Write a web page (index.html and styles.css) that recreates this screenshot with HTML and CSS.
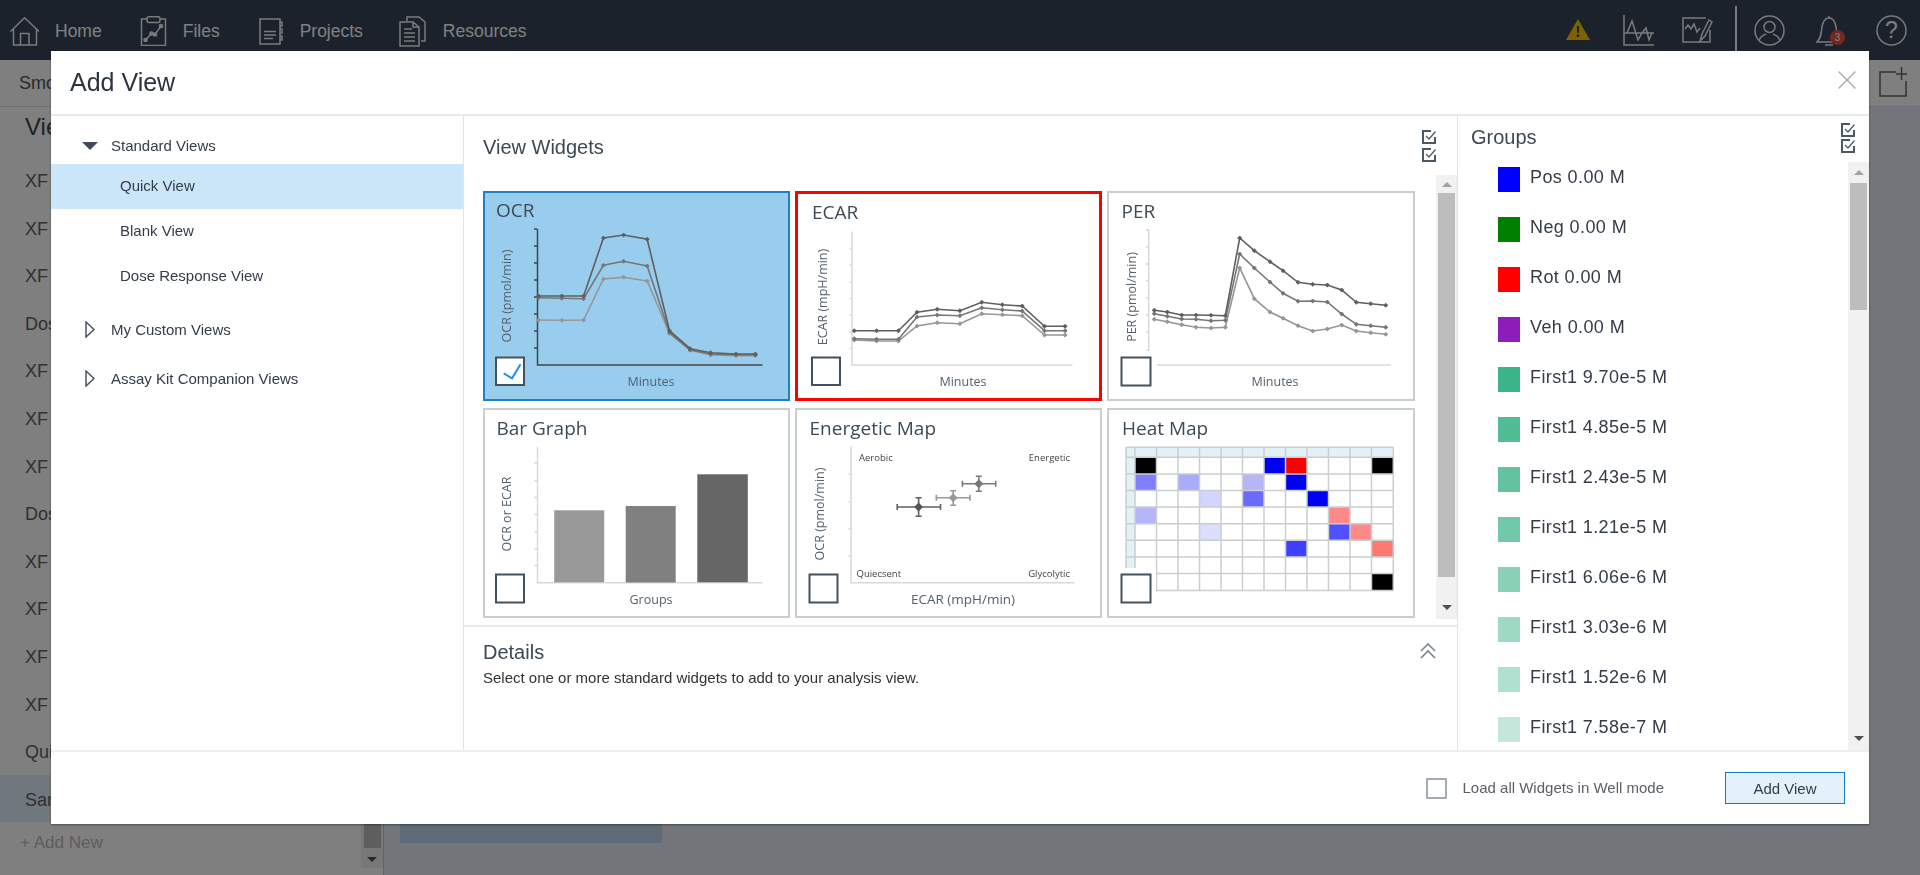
FILE: index.html
```html
<!DOCTYPE html>
<html lang="en">
  <head>
    <meta charset="UTF-8" />
    <title>Add View</title>
    <link rel="stylesheet" href="styles.css">
  </head>
  <body>
    <svg class="svg-defs" width="0" height="0">
      <defs>
        <marker id="dot1" markerUnits="userSpaceOnUse" markerWidth="5" markerHeight="5" refX="2.5" refY="2.5"><path d="M2.5 0L5 2.5L2.5 5L0 2.5Z" fill="#5f5f5f" /></marker>
        <marker id="dot2" markerUnits="userSpaceOnUse" markerWidth="5" markerHeight="5" refX="2.5" refY="2.5"><path d="M2.5 0L5 2.5L2.5 5L0 2.5Z" fill="#767676" /></marker>
        <marker id="dot3" markerUnits="userSpaceOnUse" markerWidth="5" markerHeight="5" refX="2.5" refY="2.5"><path d="M2.5 0L5 2.5L2.5 5L0 2.5Z" fill="#969696" /></marker>
      </defs>
    </svg>

    <header class="topbar">
      <a class="nav-item">
        <svg class="nav-icon" width="30" height="29" viewBox="0 0 30 29"><path d="M0.5 14.5L14.5 0.8L29 14.5M3.5 11V28H26.5V11M10.5 28V16.5H19V28" /></svg>
        Home
      </a>
      <a class="nav-item nav-files">
        <svg class="nav-icon" width="27" height="30" viewBox="0 0 27 30"><path d="M7 3H1.5V29.5H25.5V3H20M9 0.7H18Q20 0.7 20 2.7V4.5Q20 6.5 18 6.5H9Q7 6.5 7 4.5V2.7Q7 0.7 9 0.7ZM5.5 24L11.5 17.5L15 18.5L21 10" /><circle cx="5.5" cy="24" r="1.6" /><circle cx="11.5" cy="17.5" r="1.6" /><circle cx="15" cy="18.5" r="1.6" /><circle cx="21" cy="10" r="1.6" /></svg>
        Files
      </a>
      <a class="nav-item nav-projects">
        <svg class="nav-icon" width="24" height="27" viewBox="0 0 24 27"><path d="M1 1H21V26H1ZM5 13.5H17M5 17H17M5 20.5H14M21 4H23V8H21M21 11H23V15H21M21 18H23V22H21" /></svg>
        Projects
      </a>
      <a class="nav-item nav-resources">
        <svg class="nav-icon" width="28" height="31" viewBox="0 0 28 31"><path d="M8 5V1H20L26 6V25H22M1 6H14L20 11V30H1ZM14 6V11H20M5 13H13M5 17H16M5 21H16M5 25H16" /></svg>
        Resources
      </a>
      <div class="topbar-tools">
        <svg class="warn-icon" width="24" height="21" viewBox="0 0 24 21"><path class="warn-shape" d="M12 0L24 21H0Z" /><path class="warn-mark" d="M10.8 7H13.2L12.8 14H11.2ZM10.8 15.5H13.2V18H10.8Z" /></svg>
        <svg class="nav-icon tool-chart" width="31" height="31" viewBox="0 0 31 31"><path d="M1 0V30H31M1 18H31M1 18H4L9 6L15 25L19 18L23 13L26 25L29 18" /></svg>
        <svg class="nav-icon tool-edit" width="31" height="27" viewBox="0 0 31 27"><path d="M24 1H1V25H28V13M3 12L6 8L9 12L12 7L15 15L18 11M18 24L20 17L27 3L30 5L23 19Z" /></svg>
        <span class="tools-divider"></span>
        <svg class="nav-icon" width="31" height="31" viewBox="0 0 31 31"><circle cx="15.5" cy="15.5" r="14.5" /><circle cx="15.5" cy="12" r="5.5" /><path d="M5 26C6 21 10 20 12 19M26 26C25 21 21 20 19 19" /></svg>
        <div class="bell">
          <svg class="nav-icon" width="26" height="31" viewBox="0 0 26 31"><path d="M13 1V3M1 27H25C21 23 21 19 20 12C19 6 16 3 13 3C10 3 7 6 6 12C5 19 5 23 1 27ZM9 30H17" /></svg>
          <span class="bell-badge">3</span>
        </div>
        <div class="help">
          <svg class="nav-icon" width="31" height="31" viewBox="0 0 31 31"><circle cx="15.5" cy="15.5" r="14.5" /></svg>
          <span class="help-mark">?</span>
        </div>
      </div>
    </header>

    <div class="subbar">
      <span class="subbar-title">Smo</span>
      <svg class="add-icon" width="28" height="30" viewBox="0 0 28 30"><path d="M17 5H1V29H27V14M17 7H28M22.5 0V13" /></svg>
    </div>

    <div class="workspace">
      <aside class="sidebar">
        <div class="sidebar-list">
          <h2 class="sidebar-heading">View</h2>
          <div class="sidebar-row">XF</div>
          <div class="sidebar-row">XF</div>
          <div class="sidebar-row">XF</div>
          <div class="sidebar-row">Dos</div>
          <div class="sidebar-row">XF</div>
          <div class="sidebar-row">XF</div>
          <div class="sidebar-row">XF</div>
          <div class="sidebar-row">Dos</div>
          <div class="sidebar-row">XF</div>
          <div class="sidebar-row">XF</div>
          <div class="sidebar-row">XF</div>
          <div class="sidebar-row">XF</div>
          <div class="sidebar-row">Qui</div>
          <div class="sidebar-row sidebar-row-active">San</div>
          <div class="sidebar-add">+ Add New</div>
        </div>
        <div class="scrollbar scrollbar-sidebar">
          <span class="scroll-up"></span>
          <span class="scroll-thumb"></span>
          <span class="scroll-down"></span>
        </div>
      </aside>
      <main class="canvas">
        <div class="canvas-block"></div>
      </main>
    </div>

    <div class="overlay">
      <div class="modal">
        <div class="modal-header">
          <h1 class="modal-title">Add View</h1>
          <svg class="modal-close" width="18" height="18" viewBox="0 0 18 18"><path d="M0.5 0.5L17.5 17.5M17.5 0.5L0.5 17.5" /></svg>
        </div>

        <div class="modal-body">
          <nav class="tree">
            <div class="tree-group tree-group-first">
              <svg class="tree-arrow" width="16" height="8" viewBox="0 0 16 8"><path class="arrow-open" d="M0 0H16L8 8Z" /></svg>
              Standard Views
            </div>
            <div class="tree-item tree-item-active">Quick View</div>
            <div class="tree-item">Blank View</div>
            <div class="tree-item">Dose Response View</div>
            <div class="tree-group tree-group-next">
              <svg class="tree-arrow" width="16" height="17" viewBox="0 0 16 17"><path class="arrow-closed" d="M4 1L12 8.5L4 16Z" /></svg>
              My Custom Views
            </div>
            <div class="tree-group">
              <svg class="tree-arrow" width="16" height="17" viewBox="0 0 16 17"><path class="arrow-closed" d="M4 1L12 8.5L4 16Z" /></svg>
              Assay Kit Companion Views
            </div>
          </nav>

          <section class="widgets">
            <div class="widgets-header">
              <h2 class="section-title">View Widgets</h2>
              <div class="check-stack check-stack-wide">
                <svg class="check-icon" width="14" height="14" viewBox="0 0 14 14"><path class="check-box" d="M9 1H1V13H13V7" /><path class="check-tick" d="M4 6L7 9L13.5 1.5" /></svg>
                <svg class="check-icon" width="14" height="14" viewBox="0 0 14 14"><path class="check-box" d="M9 1H1V13H13V7" /><path class="check-tick" d="M4 6L7 9L13.5 1.5" /></svg>
              </div>
            </div>

            <div class="widgets-main">
              <div class="tile-grid">
                <div class="tile tile-selected">
                  <svg viewBox="485 193 303 206" width="303" height="206">
                    <text class="tile-name" x="496" y="217">OCR</text>
                    <path class="axis-dark" d="M537.5 229V365H762.5M534 229H537M534 246H537M534 263H537M534 280H537M534 297H537M534 314H537M534 331H537M534 348H537" />
                    <polyline class="line3" points="538.6,320 561.8,320.3 583.6,320 603.4,279 623.6,277.3 647.2,281 669.5,333.3 690.1,350 710.7,355 736,355.7 755.4,355.7" />
                    <polyline class="line2" points="538.6,297.7 561.8,298.3 583.6,298.7 603.4,265.3 623.6,261.3 647.2,266 669.5,332.7 690.1,350 710.7,354 736,354.7 755.4,355" />
                    <polyline class="line1" points="538.6,296 561.8,296 583.6,296 603.4,238 623.6,235 647.2,239.3 669.5,330.7 690.1,348.7 710.7,352.7 736,354 755.4,354" />
                    <text class="tile-label" transform="rotate(-90 511 296)" x="511" y="296">OCR (pmol/min)</text>
                    <text class="tile-label" x="651" y="386">Minutes</text>
                    <rect class="tile-check" x="496" y="357.5" width="28" height="27.5" />
                    <path class="tile-tick" d="M503.7 373.3L512 378.3L520.5 364.3" />
                  </svg>
                </div>

                <div class="tile tile-flagged">
                  <svg viewBox="797 193 303 206" width="303" height="206">
                    <text class="tile-name" x="812" y="219">ECAR</text>
                    <path class="axis-light" d="M852 231.5V365H1072.5M849.5 248.5H852M849.5 265H852M849.5 282H852M849.5 298.5H852M849.5 315H852M849.5 332H852M849.5 348.5H852" />
                    <polyline class="line3" points="854.3,340 876.6,341 898.4,341 917,326 937.2,322.7 959.9,323.7 981.8,313.7 1002.4,314.7 1022.2,315.7 1044.5,335 1065.1,335" />
                    <polyline class="line2" points="854.3,338.7 876.6,339.3 898.4,339.3 917,317 937.2,315 959.9,315.7 981.8,307.7 1002.4,309.7 1022.2,311 1044.5,330.7 1065.1,330.7" />
                    <polyline class="line1" points="854.3,330.7 876.6,330.7 898.4,330.7 917,312.3 937.2,309.3 959.9,310.7 981.8,302.3 1002.4,304.7 1022.2,306 1044.5,326.3 1065.1,326.3" />
                    <text class="tile-label" transform="rotate(-90 827 297)" x="827" y="297">ECAR (mpH/min)</text>
                    <text class="tile-label" x="963" y="385.5">Minutes</text>
                    <rect class="tile-check" x="812" y="357.5" width="28" height="27.5" />
                  </svg>
                </div>

                <div class="tile">
                  <svg viewBox="1109 193 304 206" width="304" height="206">
                    <text class="tile-name" x="1121.5" y="218">PER</text>
                    <path class="axis-light" d="M1146 230H1148.7V350H1146M1146 247H1148.7M1146 264H1148.7M1146 280.7H1148.7M1146 297.7H1148.7M1146 314.7H1148.7M1146 331.7H1148.7M1156.7 365H1390.7" />
                    <polyline class="line3" points="1154.3,319.3 1167.3,321.7 1181.7,324.7 1196,327.3 1211,328 1225.3,327.3 1239.7,268 1254.3,298.7 1270,312 1283,318.3 1298,325.7 1312.7,331 1327.3,329 1341.7,325 1356.3,331 1370.7,332.7 1385.7,334.3" />
                    <polyline class="line2" points="1154.3,313.7 1167.3,316.3 1181.7,319 1196,319.3 1211,320.7 1225.3,320.3 1239.7,254 1254.3,268 1270,282 1283,293.3 1298,301.3 1312.7,301 1327.3,302 1341.7,314 1356.3,324.3 1370.7,325.7 1385.7,327.3" />
                    <polyline class="line1" points="1154.3,310.3 1167.3,312 1181.7,315 1196,315 1211,315.3 1225.3,315.7 1239.7,238 1254.3,250.7 1270,261.7 1283,270.7 1298,282.3 1312.7,284.3 1327.3,285 1341.7,290 1356.3,302.3 1370.7,303.7 1385.7,305.3" />
                    <text class="tile-label" transform="rotate(-90 1136 297)" x="1136" y="297">PER (pmol/min)</text>
                    <text class="tile-label" x="1275" y="386">Minutes</text>
                    <rect class="tile-check" x="1121.5" y="357.5" width="29" height="28" />
                  </svg>
                </div>

                <div class="tile">
                  <svg viewBox="485 410 303 206" width="303" height="206">
                    <text class="tile-name" x="496.5" y="434.5">Bar Graph</text>
                    <path class="axis-light" d="M537.5 446.7V582.7M534.5 463H537.5M534.5 480.5H537.5M534.5 497.5H537.5M534.5 514.5H537.5M534.5 532H537.5M534.5 549H537.5M534.5 565.5H537.5M536.5 582.7H762.5" />
                    <rect class="bar-light" x="554.2" y="510.3" width="50" height="72" />
                    <rect class="bar-mid" x="625.7" y="506" width="50" height="76.5" />
                    <rect class="bar-dark" x="697.3" y="474.3" width="50.5" height="108" />
                    <text class="tile-label" transform="rotate(-90 511 514)" x="511" y="514">OCR or ECAR</text>
                    <text class="tile-label" x="651" y="604">Groups</text>
                    <rect class="tile-check" x="496" y="574.5" width="28" height="28" />
                  </svg>
                </div>

                <div class="tile">
                  <svg viewBox="797 410 303 206" width="303" height="206">
                    <text class="tile-name" x="809.5" y="434.5">Energetic Map</text>
                    <path class="axis-light" d="M851 446.7V582.7H1074.5M848.5 474H851M848.5 501.7H851M848.5 528.7H851M848.5 555.7H851" />
                    <text class="tile-note" x="859" y="461">Aerobic</text>
                    <text class="tile-note tile-note-end" x="1070" y="461">Energetic</text>
                    <text class="tile-note" x="856.5" y="576.5">Quiecsent</text>
                    <text class="tile-note tile-note-end" x="1070" y="576.5">Glycolytic</text>
                    <path class="err err-dark" d="M897.2 507H940.5M897.2 504V510M940.5 504V510M918.6 497.7V516.3M915.5 497.7H921.7M915.5 516.3H921.7" />
                    <path class="err-dot-dark" d="M918.6 502.5L923 507L918.6 511.5L914.2 507Z" />
                    <path class="err err-light" d="M936.3 497.7H970M936.3 494.7V500.7M970 494.7V500.7M953.2 490.7V505.3M950.2 490.7H956.2M950.2 505.3H956.2" />
                    <path class="err-dot-light" d="M953.2 493.2L957.7 497.7L953.2 502.2L948.7 497.7Z" />
                    <path class="err err-mid" d="M962.4 483.7H995.7M962.4 480.7V486.7M995.7 480.7V486.7M978.8 476.3V491.3M975.8 476.3H981.8M975.8 491.3H981.8" />
                    <path class="err-dot-mid" d="M978.8 479.2L983.3 483.7L978.8 488.2L974.3 483.7Z" />
                    <text class="tile-label" transform="rotate(-90 824 514)" x="824" y="514">OCR (pmol/min)</text>
                    <text class="tile-label tile-label-wide" x="963" y="603.5">ECAR (mpH/min)</text>
                    <rect class="tile-check" x="809.5" y="574.5" width="28" height="28" />
                  </svg>
                </div>

                <div class="tile">
                  <svg viewBox="1109 410 304 206" width="304" height="206">
                    <text class="tile-name" x="1122" y="434.5">Heat Map</text>
                    <rect class="heat-head" x="1126" y="447.3" width="267.3" height="10" />
                    <rect class="heat-head" x="1126" y="447.3" width="9" height="143.7" />
                    <rect class="heat-black" x="1135" y="457.3" width="21.5" height="16.6" />
                    <rect class="heat-blue" x="1264" y="457.3" width="21.5" height="16.6" />
                    <rect class="heat-red" x="1285.5" y="457.3" width="21.5" height="16.6" />
                    <rect class="heat-black" x="1371.5" y="457.3" width="21.5" height="16.6" />
                    <rect class="heat-blue-50" x="1135" y="473.9" width="21.5" height="16.6" />
                    <rect class="heat-blue-33" x="1178" y="473.9" width="21.5" height="16.6" />
                    <rect class="heat-blue-30" x="1242.5" y="473.9" width="21.5" height="16.6" />
                    <rect class="heat-blue" x="1285.5" y="473.9" width="21.5" height="16.6" />
                    <rect class="heat-blue-17" x="1199.5" y="490.5" width="21.5" height="16.6" />
                    <rect class="heat-blue-60" x="1242.5" y="490.5" width="21.5" height="16.6" />
                    <rect class="heat-blue" x="1307" y="490.5" width="21.5" height="16.6" />
                    <rect class="heat-blue-30" x="1135" y="507.1" width="21.5" height="16.6" />
                    <rect class="heat-red-45" x="1328.5" y="507.1" width="21.5" height="16.6" />
                    <rect class="heat-blue-13" x="1199.5" y="523.7" width="21.5" height="16.6" />
                    <rect class="heat-blue-68" x="1328.5" y="523.7" width="21.5" height="16.6" />
                    <rect class="heat-red-45" x="1350" y="523.7" width="21.5" height="16.6" />
                    <rect class="heat-blue-75" x="1285.5" y="540.3" width="21.5" height="16.6" />
                    <rect class="heat-red-55" x="1371.5" y="540.3" width="21.5" height="16.6" />
                    <rect class="heat-black" x="1371.5" y="573.5" width="21.5" height="16.6" />
                    <path class="heat-lines" d="M1126 447.3H1393.3M1126 457.3H1393.3M1126 473.9H1393.3M1126 490.5H1393.3M1126 507.1H1393.3M1126 523.7H1393.3M1126 540.3H1393.3M1126 556.9H1393.3M1126 573.5H1393.3M1126 590.5H1393.3M1126 447.3V590.5M1135 447.3V590.5M1156.5 447.3V590.5M1178 447.3V590.5M1199.5 447.3V590.5M1221 447.3V590.5M1242.5 447.3V590.5M1264 447.3V590.5M1285.5 447.3V590.5M1307 447.3V590.5M1328.5 447.3V590.5M1350 447.3V590.5M1371.5 447.3V590.5M1393.3 447.3V590.5" />
                    <rect class="heat-patch" x="1119" y="568" width="37" height="37" />
                    <rect class="tile-check" x="1121.5" y="574.5" width="29" height="28" />
                  </svg>
                </div>
              </div>

              <div class="scrollbar scrollbar-widgets">
                <span class="scroll-up"></span>
                <span class="scroll-thumb"></span>
                <span class="scroll-down"></span>
              </div>
            </div>

            <div class="details">
              <div class="details-header">
                <h2 class="section-title">Details</h2>
                <svg class="details-toggle" width="16" height="16" viewBox="0 0 16 16"><path d="M1 8L8 1L15 8M1 15L8 8L15 15" /></svg>
              </div>
              <p class="details-text">Select one or more standard widgets to add to your analysis view.</p>
            </div>
          </section>

          <section class="groups">
            <div class="groups-header">
              <h2 class="section-title">Groups</h2>
              <div class="check-stack">
                <svg class="check-icon" width="14" height="14" viewBox="0 0 14 14"><path class="check-box" d="M9 1H1V13H13V7" /><path class="check-tick" d="M4 6L7 9L13.5 1.5" /></svg>
                <svg class="check-icon" width="14" height="14" viewBox="0 0 14 14"><path class="check-box" d="M9 1H1V13H13V7" /><path class="check-tick" d="M4 6L7 9L13.5 1.5" /></svg>
              </div>
            </div>
            <div class="groups-main">
              <ul class="group-list">
                <li class="group-row"><span class="swatch swatch-pos"></span>Pos 0.00 M</li>
                <li class="group-row"><span class="swatch swatch-neg"></span>Neg 0.00 M</li>
                <li class="group-row"><span class="swatch swatch-rot"></span>Rot 0.00 M</li>
                <li class="group-row"><span class="swatch swatch-veh"></span>Veh 0.00 M</li>
                <li class="group-row"><span class="swatch swatch-first1"></span>First1 9.70e-5 M</li>
                <li class="group-row"><span class="swatch swatch-first2"></span>First1 4.85e-5 M</li>
                <li class="group-row"><span class="swatch swatch-first3"></span>First1 2.43e-5 M</li>
                <li class="group-row"><span class="swatch swatch-first4"></span>First1 1.21e-5 M</li>
                <li class="group-row"><span class="swatch swatch-first5"></span>First1 6.06e-6 M</li>
                <li class="group-row"><span class="swatch swatch-first6"></span>First1 3.03e-6 M</li>
                <li class="group-row"><span class="swatch swatch-first7"></span>First1 1.52e-6 M</li>
                <li class="group-row"><span class="swatch swatch-first8"></span>First1 7.58e-7 M</li>
              </ul>
              <div class="scrollbar scrollbar-groups">
                <span class="scroll-up"></span>
                <span class="scroll-thumb"></span>
                <span class="scroll-down"></span>
              </div>
            </div>
          </section>
        </div>

        <div class="modal-footer">
          <span class="well-check"></span>
          <span class="well-label">Load all Widgets in Well mode</span>
          <button class="add-button">Add View</button>
        </div>
      </div>
    </div>
  </body>
</html>
```

FILE: styles.css
```css
* {
  box-sizing: border-box;
}
html, body {
  height: 100%;
}
body {
  margin: 0;
  display: flex;
  flex-direction: column;
  overflow: hidden;
  font-family: "Liberation Sans", Arial, sans-serif;
  background-color: #e5ecf4;
}
h1, h2, p, ul {
  margin: 0;
  padding: 0;
  font-weight: normal;
}
.svg-defs {
  position: absolute;
}

/* page behind the dialog */
.topbar {
  flex: 0 0 60px;
  display: flex;
  background-color: #384558;
  color: #fff;
  font-size: 17.5px;
}
.nav-item {
  display: flex;
  align-items: center;
  gap: 15px;
  height: 60px;
  padding: 2px 0 0 10px;
}
.nav-files { padding-left: 38px; gap: 16px; }
.nav-projects { padding-left: 39px; gap: 17px; }
.nav-resources { padding-left: 36px; gap: 16px; }
.nav-icon {
  fill: none;
  stroke: #f4f4f4;
  stroke-width: 1.5;
}
.nav-icon circle[r="1.6"] {
  fill: #f4f4f4;
}
.topbar-tools {
  margin-left: auto;
  display: flex;
  align-items: center;
  gap: 30px;
  height: 60px;
  padding-right: 13px;
}
.tool-chart { margin-right: -2px; }
.tool-edit { margin-right: -1px; }
.warn-icon {
  margin: -2px 3px 0 0;
}
.warn-shape { fill: #ffc400; }
.warn-mark { fill: #384558; }
.tools-divider {
  align-self: flex-start;
  width: 2px;
  height: 54px;
  margin: 6px -13px 0 -7px;
  background-color: #f4f4f4;
}
.bell, .help {
  position: relative;
  height: 31px;
}
.bell {
  margin: 0 4px 0 1px;
}
.bell-badge {
  position: absolute;
  left: 14px;
  top: 15px;
  width: 15px;
  height: 15px;
  border-radius: 50%;
  background-color: #e8523f;
  color: #fff;
  font-size: 10px;
  line-height: 15px;
  text-align: center;
}
.help-mark {
  position: absolute;
  left: 0;
  top: 0;
  width: 31px;
  font-size: 23px;
  line-height: 31px;
  text-align: center;
}
.subbar {
  flex: 0 0 47px;
  display: flex;
  align-items: center;
  justify-content: space-between;
  padding: 0 13px 0 19px;
  background-color: #fff;
  border-bottom: 1px solid #ddd;
  color: #555;
  font-size: 18px;
}
.add-icon {
  fill: none;
  stroke: #666;
  stroke-width: 1.5;
  margin-top: -2px;
}
.workspace {
  flex: 1;
  display: flex;
  min-height: 0;
}
.sidebar {
  flex: 0 0 384px;
  display: flex;
  background-color: #fff;
  border-right: 1px solid #c4c8cc;
}
.sidebar-list {
  flex: 1;
  padding-left: 25px;
}
.sidebar-heading {
  height: 36px;
  margin-bottom: 13px;
  padding-top: 2px;
  font-size: 24px;
  line-height: 36px;
  color: #444;
}
.sidebar-row {
  height: 47.6px;
  padding: 2px 0 0 25px;
  margin-left: -25px;
  line-height: 47.6px;
  font-size: 18px;
  color: #5f6266;
}
.sidebar-row-active {
  margin-right: -22px;
  background-color: #dff0fa;
}
.sidebar-add {
  margin-left: -5px;
  height: 40px;
  line-height: 42px;
  font-size: 17px;
  color: #bbb;
}
.canvas {
  flex: 1;
  display: flex;
  align-items: flex-end;
  padding: 0 0 32px 16px;
}
.canvas-block {
  width: 262px;
  height: 60px;
  background-color: #bad8ec;
}

/* scrollbars */
.scrollbar {
  flex: 0 0 21px;
  display: flex;
  flex-direction: column;
  align-items: center;
  background-color: #f1f1f1;
}
.scroll-up, .scroll-down {
  flex: 0 0 18px;
  display: flex;
  align-items: center;
  justify-content: center;
}
.scroll-up::before {
  content: "";
  border: 5px solid transparent;
  border-top: 0;
  border-bottom: 5px solid #a3a3a3;
}
.scroll-down::before {
  content: "";
  border: 5px solid transparent;
  border-bottom: 0;
  border-top: 5px solid #505050;
}
.scroll-thumb {
  width: 17px;
  margin-bottom: auto;
  background-color: #bdbdbd;
}
.scrollbar-sidebar {
  flex-basis: 22px;
  margin-bottom: 7px;
}
.scrollbar-sidebar .scroll-thumb { height: 723px; }
.scrollbar-widgets {
  height: 444px;
  padding-bottom: 3px;
}
.scrollbar-widgets .scroll-thumb { height: 384px; }
.scrollbar-groups { padding-bottom: 3px; }
.scrollbar-groups .scroll-up { flex-basis: 21px; }
.scrollbar-groups .scroll-thumb { height: 127px; }

/* dialog */
.overlay {
  position: fixed;
  inset: 0;
  padding: 51px 51px 51px;
  background-color: rgba(0, 0, 0, 0.5);
}
.modal {
  display: flex;
  flex-direction: column;
  height: 773px;
  background-color: #fff;
  box-shadow: 0 1px 2px rgba(0, 0, 0, 0.4);
}
.modal-header {
  flex: 0 0 65px;
  display: flex;
  align-items: center;
  justify-content: space-between;
  padding: 0 13px 0 19px;
  border-bottom: 2px solid #e8eaec;
}
.modal-title {
  font-size: 25px;
  color: #2b3440;
}
.modal-close {
  margin-top: -5px;
  fill: none;
  stroke: #a8afb5;
  stroke-width: 1.5;
}
.modal-body {
  flex: 1;
  display: flex;
  min-height: 0;
}
.modal-footer {
  flex: 0 0 74px;
  display: flex;
  align-items: center;
  justify-content: flex-end;
  padding-right: 24px;
  border-top: 2px solid #eceeef;
}
.well-check {
  width: 21px;
  height: 21px;
  margin-right: 16px;
  border: 2px solid #a3abb6;
  border-radius: 1px;
}
.well-label {
  margin: 0 61px 2px 0;
  font-size: 15px;
  color: #5a5f66;
}
.add-button {
  width: 120px;
  height: 32px;
  background-color: #e3f2fa;
  border: 1px solid #0f7dbb;
  font-family: inherit;
  font-size: 15px;
  color: #333c48;
}

/* left tree */
.tree {
  flex: 0 0 413px;
  border-right: 1px solid #e1e4e6;
  padding-top: 11px;
  font-size: 15px;
  color: #333c48;
}
.tree-group {
  display: flex;
  align-items: center;
  height: 49px;
  padding-left: 31px;
}
.tree-group-first { height: 37px; }
.tree-group-next { margin-top: 6px; }
.tree-arrow {
  margin-right: 13px;
}
.arrow-open { fill: #3f4b58; }
.arrow-closed {
  fill: #fff;
  stroke: #4b5663;
  stroke-width: 1.5;
}
.tree-item {
  height: 45px;
  line-height: 43px;
  padding-left: 69px;
}
.tree-item-active {
  background-color: #cbe6f8;
}

/* widgets column */
.widgets {
  flex: 0 0 994px;
  display: flex;
  flex-direction: column;
  border-right: 1px solid #e1e4e6;
}
.widgets-header {
  flex: 0 0 59px;
  display: flex;
  justify-content: space-between;
  padding: 20px 21px 0 19px;
}
.section-title {
  font-size: 20px;
  line-height: 23px;
  color: #3c4855;
}
.check-stack {
  display: flex;
  flex-direction: column;
  gap: 2px;
  margin-top: -3px;
}
.check-stack-wide {
  gap: 4px;
  margin-top: -6px;
}
.check-icon {
  display: block;
  fill: none;
}
.check-box {
  stroke: #4c5864;
  stroke-width: 2;
}
.check-tick {
  stroke: #4c5864;
  stroke-width: 1.2;
}
.widgets-main {
  display: flex;
  justify-content: space-between;
  padding-left: 19px;
}
.tile-grid {
  display: grid;
  grid-template-columns: 307px 307px 308px;
  grid-auto-rows: 210px;
  gap: 7px 5px;
  padding-top: 16px;
}
.tile {
  border: 2px solid #c9ced1;
  background-color: #fff;
}
.tile svg {
  display: block;
}
.tile-selected {
  background-color: #99cdee;
  border-color: #1b82c4;
}
.tile-flagged {
  border-color: #f00;
  box-shadow: inset 0 0 0 1px #f00;
}
.tile-name {
  font-family: "Open Sans", sans-serif;
  font-size: 19px;
  fill: #3d4a57;
}
.tile-label {
  font-family: "Open Sans", sans-serif;
  font-size: 12.5px;
  fill: #55626e;
  text-anchor: middle;
}
.tile-label-wide {
  font-size: 13.5px;
}
.tile-note {
  font-family: "Open Sans", sans-serif;
  font-size: 9.5px;
  fill: #444;
}
.tile-note-end {
  text-anchor: end;
}
.axis-dark {
  fill: none;
  stroke: #444;
  stroke-width: 1.5;
}
.axis-light {
  fill: none;
  stroke: #d6d9db;
  stroke-width: 1.5;
}
.line1, .line2, .line3 {
  fill: none;
  stroke-width: 1.6;
}
.line1 {
  stroke: #5f5f5f;
  marker: url(#dot1);
}
.line2 {
  stroke: #767676;
  marker: url(#dot2);
}
.line3 {
  stroke: #969696;
  marker: url(#dot3);
}
.tile-check {
  fill: #fff;
  stroke: #43525f;
  stroke-width: 2;
}
.tile-tick {
  fill: none;
  stroke: #1d93e4;
  stroke-width: 2;
}
.bar-light { fill: #999; }
.bar-mid { fill: #808080; }
.bar-dark { fill: #666; }
.err {
  fill: none;
  stroke-width: 1.6;
}
.err-dark { stroke: #606060; }
.err-light { stroke: #999; }
.err-mid { stroke: #7a7a7a; }
.err-dot-dark { fill: #555; }
.err-dot-light { fill: #999; }
.err-dot-mid { fill: #777; }
.heat-head { fill: #e2f1f8; }
.heat-lines {
  fill: none;
  stroke: #c9ced1;
  stroke-width: 1.5;
}
.heat-patch { fill: #fff; }
.heat-black { fill: #000; }
.heat-red { fill: #f00; }
.heat-red-45 { fill: #ff8888; }
.heat-red-55 { fill: #ff7a6e; }
.heat-blue { fill: #0000f0; }
.heat-blue-75 { fill: #4040ff; }
.heat-blue-68 { fill: #5050ff; }
.heat-blue-60 { fill: #6a6aff; }
.heat-blue-50 { fill: #7f7fff; }
.heat-blue-33 { fill: #aaaaff; }
.heat-blue-30 { fill: #b5b5f8; }
.heat-blue-17 { fill: #d4d4ff; }
.heat-blue-13 { fill: #ddddff; }
.details {
  flex: 1;
  margin-top: 6px;
  padding: 14px 21px 0 19px;
  border-top: 2px solid #e8eaec;
}
.details-header {
  display: flex;
  justify-content: space-between;
  align-items: flex-start;
}
.details-toggle {
  margin-top: 2px;
  fill: none;
  stroke: #7c858d;
  stroke-width: 1.6;
}
.details-text {
  margin-top: 5px;
  font-size: 15px;
  color: #333;
}

/* groups column */
.groups {
  flex: 1;
  display: flex;
  flex-direction: column;
  min-width: 0;
}
.groups-header {
  flex: 0 0 46px;
  display: flex;
  justify-content: space-between;
  padding: 10px 14px 0 13px;
}
.groups-main {
  flex: 1;
  display: flex;
  min-height: 0;
}
.group-list {
  flex: 1;
  list-style: none;
  overflow: hidden;
  padding: 5px 0 0 40px;
}
.group-row {
  display: flex;
  align-items: flex-start;
  gap: 10px;
  height: 50px;
  font-size: 18px;
  letter-spacing: 0.4px;
  line-height: 20px;
  color: #333c48;
}
.swatch {
  flex: 0 0 22px;
  height: 25px;
}
.swatch-pos { background-color: #00f; }
.swatch-neg { background-color: #008000; }
.swatch-rot { background-color: #f00; }
.swatch-veh { background-color: #8e1cb8; }
.swatch-first1 { background-color: #3cb489; }
.swatch-first2 { background-color: #52bc95; }
.swatch-first3 { background-color: #63c2a0; }
.swatch-first4 { background-color: #72c8aa; }
.swatch-first5 { background-color: #8ad1b8; }
.swatch-first6 { background-color: #9dd9c3; }
.swatch-first7 { background-color: #b0e0cf; }
.swatch-first8 { background-color: #c4e7db; }
```
